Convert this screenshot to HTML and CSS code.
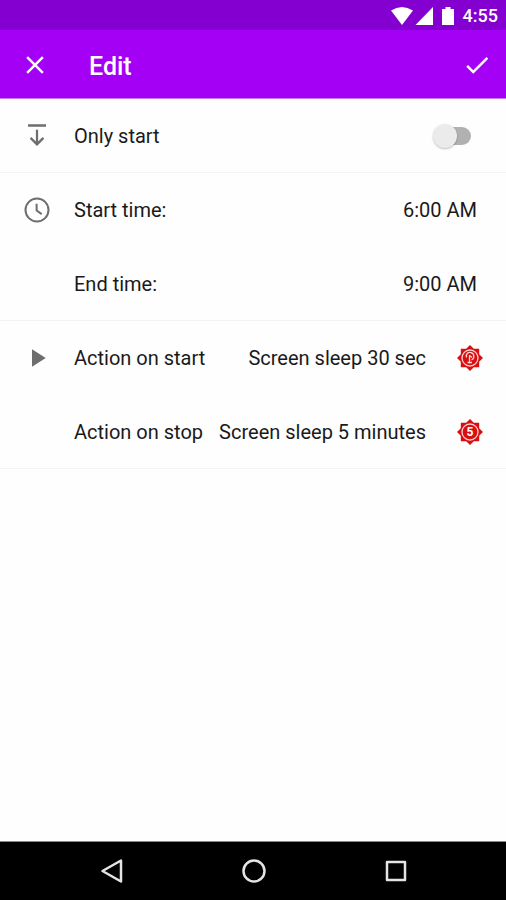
FILE: index.html
```html
<!DOCTYPE html>
<html lang="en">
<head>
<meta charset="utf-8">
<meta name="viewport" content="width=device-width, initial-scale=1">
<title>Edit</title>
<link rel="stylesheet" href="styles.css">
</head>
<body>
<div class="screen">
  <div class="status">
    <svg class="status-icons" viewBox="0 0 64 20" aria-hidden="true">
      <path d="M0 4.500Q11-2.500 22 4.500L11 19Z"/>
      <path d="M24.500 19H42V1Z"/>
      <path d="M51 3h3.500V1h5v2H63v16H51Z"/>
    </svg>
    <span class="clock">4:55</span>
  </div>
  <header class="appbar">
    <button class="icon-button" type="button" aria-label="Close">
      <svg class="icon" viewBox="0 0 24 24"><path d="M19 6.410 17.590 5 12 10.590 6.410 5 5 6.410 10.590 12 5 17.590 6.410 19 12 13.410 17.590 19 19 17.590 13.410 12z"/></svg>
    </button>
    <h1 class="title">Edit</h1>
    <button class="icon-button" type="button" aria-label="Save">
      <svg class="icon" viewBox="0 0 24 24"><path d="M9 16.170 4.830 12l-1.420 1.410L9 19 21 7l-1.410-1.410z"/></svg>
    </button>
  </header>
  <main class="content">
    <section class="group">
      <div class="row">
        <svg class="icon" viewBox="0 0 24 24" aria-hidden="true"><path d="M4.800 2.500h14.400v2H4.800zM11.100 7h1.800v9.400l3.600-3.600 1.300 1.300L12 20l-5.800-5.900 1.300-1.300 3.600 3.600z"/></svg>
        <label class="label" for="only-start">Only start</label>
        <input class="switch" id="only-start" type="checkbox" role="switch">
      </div>
    </section>
    <section class="group">
      <div class="row">
        <svg class="icon" viewBox="0 0 24 24" aria-hidden="true"><circle class="outline" cx="12" cy="12" r="9.200"/><path class="outline" d="M11.700 7v5.400l4.100 2.900"/></svg>
        <span class="label" id="start-time">Start time:</span>
        <button class="value" type="button" aria-describedby="start-time">6:00 AM</button>
      </div>
      <div class="row">
        <span class="icon"></span>
        <span class="label" id="end-time">End time:</span>
        <button class="value" type="button" aria-describedby="end-time">9:00 AM</button>
      </div>
    </section>
    <section class="group">
      <div class="row action">
        <svg class="icon" viewBox="0 0 24 24" aria-hidden="true"><path d="M8 5v14l11-7z"/></svg>
        <span class="label" id="on-start">Action on start</span>
        <button class="value" type="button" aria-describedby="on-start">Screen sleep 30 sec</button>
        <svg class="badge" viewBox="0 0 26 26" aria-hidden="true">
          <path d="M13 0l3.800 3.800h5.400v5.400L26 13l-3.800 3.800v5.400h-5.400L13 26l-3.800-3.800H3.800v-5.400L0 13l3.800-3.800V3.800h5.400z"/>
          <circle class="ring" cx="13" cy="13" r="8"/>
          <path class="mark" d="M9.500 12.500C8.500 8 12 7 13.500 7.500c4 .5 4.500 6 1 7.500M12.500 10v8.500M12.500 10.500l2.500 2M10.500 17.500h4.500"/>
        </svg>
      </div>
      <div class="row action">
        <span class="icon"></span>
        <span class="label" id="on-stop">Action on stop</span>
        <button class="value" type="button" aria-describedby="on-stop">Screen sleep 5 minutes</button>
        <svg class="badge" viewBox="0 0 26 26" aria-hidden="true">
          <path d="M13 0l3.800 3.800h5.400v5.400L26 13l-3.800 3.800v5.400h-5.400L13 26l-3.800-3.800H3.800v-5.400L0 13l3.800-3.800V3.800h5.400z"/>
          <circle class="ring" cx="13" cy="13" r="8"/>
          <text class="digit" x="13" y="17">5</text>
        </svg>
      </div>
    </section>
  </main>
  <nav class="navbar" aria-label="System">
    <button class="icon-button" type="button" aria-label="Back">
      <svg class="nav-icon" viewBox="0 0 26 26"><path d="M22 2.500v21L3.500 13z"/></svg>
    </button>
    <button class="icon-button" type="button" aria-label="Home">
      <svg class="nav-icon" viewBox="0 0 26 26"><circle cx="13" cy="13" r="10.500"/></svg>
    </button>
    <button class="icon-button" type="button" aria-label="Recent apps">
      <svg class="nav-icon" viewBox="0 0 26 26"><path d="M4 4h18v18H4z"/></svg>
    </button>
  </nav>
</div>
</body>
</html>
```
FILE: styles.css
```css
* {
  box-sizing: border-box;
}

body {
  margin: 0;
  font-family: Roboto, "Liberation Sans", sans-serif;
  font-size: 20px;
  line-height: 24px;
  color: #1a1a1a;
  background: #fefefe;
}

button {
  margin: 0;
  padding: 0;
  border: 0;
  background: none;
  font: inherit;
  color: inherit;
  cursor: pointer;
}

svg {
  display: block;
}

.screen {
  display: flex;
  flex-direction: column;
  min-height: 100vh;
}

.status {
  display: flex;
  align-items: center;
  justify-content: flex-end;
  gap: 8px;
  height: 30px;
  padding: 2px 8px 0 0;
  background: #8400d0;
  color: #fff;
}

.status-icons {
  width: 64px;
  height: 20px;
  fill: #fff;
}

.clock {
  font-size: 18px;
  font-weight: 500;
}

.appbar {
  display: flex;
  align-items: center;
  height: 69px;
  padding: 1px 14px 0 20px;
  border-bottom: 1px solid #c77af5;
  background: #a400f5;
  color: #fff;
}

.title {
  flex: 1;
  margin: 0;
  padding: 4px 0 0 39px;
  font-size: 25px;
  line-height: 32px;
  font-weight: 500;
}

.icon {
  flex: none;
  width: 30px;
  height: 30px;
  fill: currentColor;
}

.content {
  flex: 1;
}

.group {
  box-shadow: inset 0 -1px #f3f3f3;
}

.row {
  display: flex;
  align-items: center;
  min-height: 74px;
  padding: 0 29px 0 22px;
}

.row.action {
  padding-right: 23px;
}

.row .icon {
  color: #6e6e6e;
}

.icon .outline {
  fill: none;
  stroke: currentColor;
  stroke-width: 1.6;
}

.label {
  flex: 1;
  padding-left: 22px;
  white-space: nowrap;
}

.value {
  text-align: right;
}

.switch {
  position: relative;
  appearance: none;
  width: 38px;
  height: 26px;
  margin: 0 6px 0 0;
  cursor: pointer;
}

.switch::before {
  content: "";
  position: absolute;
  inset: 4px 0 4px 4px;
  border-radius: 9px;
  background: #b1b1b1;
}

.switch::after {
  content: "";
  position: absolute;
  top: 1px;
  left: 0;
  width: 24px;
  height: 24px;
  border-radius: 50%;
  background: #ebebeb;
  box-shadow: 0 1px 2px rgba(0, 0, 0, 0.25);
}

.switch:checked::after {
  left: 14px;
}

.badge {
  flex: none;
  width: 26px;
  height: 26px;
  margin-left: 31px;
  fill: #d80f10;
}

.badge .ring,
.badge .mark {
  fill: none;
  stroke: #fbd0d0;
  stroke-width: 1.3;
}

.badge .digit {
  fill: #fff;
  font-size: 12px;
  font-weight: 700;
  text-anchor: middle;
}

.navbar {
  display: flex;
  align-items: center;
  justify-content: center;
  gap: 116px;
  height: 59px;
  padding-left: 1px;
  border-top: 1px solid #8a8a8a;
  background: #000;
}

.nav-icon {
  width: 26px;
  height: 26px;
  fill: none;
  stroke: #e4e4e4;
  stroke-width: 2.5;
  stroke-linejoin: round;
}
```
